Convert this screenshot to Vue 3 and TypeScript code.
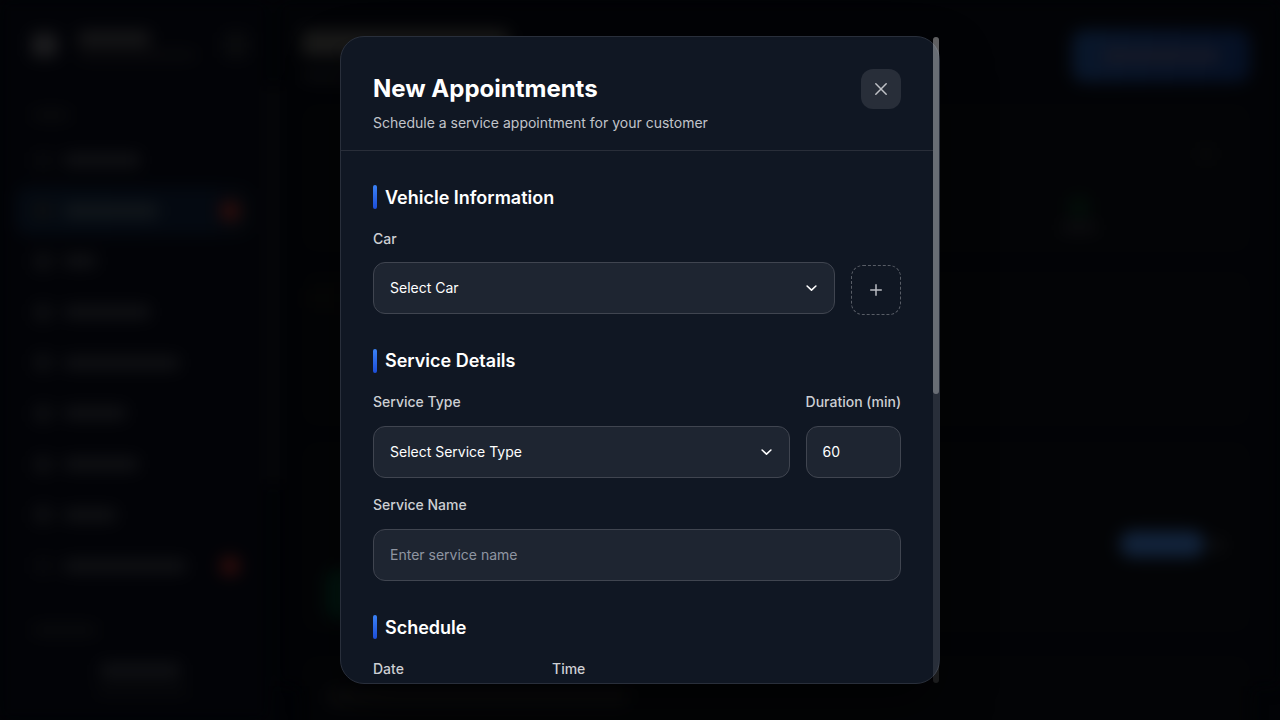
<script setup lang="ts">
interface NavItem {
  label: number
  icon: number
  active?: boolean
  badge?: boolean
}

const nav: NavItem[] = [
  { label: 76, icon: 0.5 },
  { label: 94, icon: 0.9, active: true, badge: true },
  { label: 32, icon: 1 },
  { label: 86, icon: 1 },
  { label: 115, icon: 1 },
  { label: 62, icon: 1 },
  { label: 74, icon: 1 },
  { label: 52, icon: 1 },
  { label: 122, icon: 0.5, badge: true },
]
</script>

<template>
  <div class="screen">
    <div class="dashboard" aria-hidden="true">
      <aside class="sidebar">
        <div class="brand">
          <i class="logo"></i>
          <div class="brand-copy"><i class="name"></i><i class="tagline"></i></div>
          <i class="collapse"></i>
        </div>
        <i class="caption"></i>
        <div v-for="(item, i) in nav" :key="i" class="nav-item" :class="{ active: item.active }">
          <i class="nav-icon" :style="{ opacity: item.icon }"></i>
          <i class="nav-label" :style="{ width: item.label + 'px' }"></i>
          <i v-if="item.badge" class="badge"></i>
        </div>
        <i class="caption account"></i>
        <i class="user"></i>
        <i class="role"></i>
      </aside>
      <i class="side-scroll"></i>
      <section class="main">
        <div class="page-head">
          <div class="page-copy"><i class="page-title"></i><i class="page-sub"></i></div>
          <div class="page-action"><i></i></div>
        </div>
        <div class="panel stats"><i class="dot"></i><i class="stat"></i><i class="stat-label"></i></div>
        <div class="panel filters"><i></i></div>
        <div class="panel card">
          <i class="go"></i>
          <i class="status"></i>
          <i class="more"></i>
        </div>
        <div class="panel last"><i></i></div>
      </section>
    </div>

    <div class="overlay">
      <div class="modal">
        <div class="content">
          <header class="head">
            <div>
              <h2>New Appointments</h2>
              <p>Schedule a service appointment for your customer</p>
            </div>
            <button class="close" type="button" aria-label="Close">
              <svg width="20" height="20" viewBox="0 0 20 20" fill="none" stroke="currentColor" stroke-width="1.5" stroke-linecap="round">
                <path d="M4.8 4.8 15.2 15.2M15.2 4.8 4.8 15.2" />
              </svg>
            </button>
          </header>

          <div class="body">
            <section>
              <h3>Vehicle Information</h3>
              <div class="row">
                <div class="field grow">
                  <label>Car</label>
                  <div class="control">
                    <span>Select Car</span>
                    <svg class="chevron" width="14" height="14" viewBox="0 0 14 14"><path d="M3.1 5 7.5 9.1l4.4-4.1" /></svg>
                  </div>
                </div>
                <button class="add" type="button" aria-label="Add car">
                  <svg width="16" height="16" viewBox="0 0 16 16" fill="none" stroke="currentColor" stroke-width="1.5">
                    <path d="M8 2.2v11.6M2.2 8h11.6" />
                  </svg>
                </button>
              </div>
            </section>

            <section>
              <h3>Service Details</h3>
              <div class="row service">
                <div class="field grow">
                  <label>Service Type</label>
                  <div class="control">
                    <span>Select Service Type</span>
                    <svg class="chevron" width="14" height="14" viewBox="0 0 14 14"><path d="M3.1 5 7.5 9.1l4.4-4.1" /></svg>
                  </div>
                </div>
                <div class="field duration">
                  <label>Duration (min)</label>
                  <div class="control"><span>60</span></div>
                </div>
              </div>
              <div class="field name-field">
                <label>Service Name</label>
                <div class="control placeholder"><span>Enter service name</span></div>
              </div>
            </section>

            <section>
              <h3>Schedule</h3>
              <div class="thirds">
                <label>Date</label>
                <label>Time</label>
              </div>
            </section>
          </div>
        </div>
      </div>
      <div class="scrollbar"><div class="thumb"></div></div>
    </div>
  </div>
</template>

<style>
html,
body {
  background: #020306;
  overflow: hidden;
}
</style>

<style scoped>
* { box-sizing: border-box; }
i { display: block; border-radius: 4px; flex: none; }
.screen {
  position: relative;
  width: 1280px;
  height: 720px;
  overflow: hidden;
  background: #020306;
  font-family: Inter, "Liberation Sans", sans-serif;
  -webkit-font-smoothing: antialiased;
}

/* dimmed dashboard behind the dialog */
.dashboard {
  display: flex;
  height: 720px;
  filter: blur(8px);
}
.sidebar { width: 268px; padding: 24px 16px 0; background: #020307; }
.brand { display: flex; align-items: center; height: 42px; padding: 0 0 0 16px; }
.logo { width: 25px; height: 24px; background: #1d1d1f; }
.brand-copy { margin-left: 21px; width: 124px; }
.name { width: 72px; height: 15px; background: #171718; }
.tagline { width: 118px; height: 8px; background: #0b0b0d; margin-top: 5px; }
.collapse { width: 24px; height: 26px; margin-left: 22px; background: #0a0b0d; }
.caption { width: 38px; height: 10px; margin: 44px 0 16px 16px; background: #0a0b0d; }
.nav-item {
  display: flex;
  align-items: center;
  height: 48px;
  margin-bottom: 2.7px;
  padding: 0 12px 0 18px;
}
.nav-item.active { background: linear-gradient(90deg, #040a12, #040911 80%, #04070a); border-radius: 12px; }
.nav-icon { width: 18px; height: 17px; background: #0e0f12; margin-right: 12px; }
.nav-label { height: 12px; background: #121316; }
.active .nav-label { background: #12171b; height: 14px; }
.badge { width: 20px; height: 20px; margin-left: auto; border-radius: 50%; background: #300d0c; }
.caption.account { width: 65px; margin: 35px 0 0 16px; }
.user { width: 80px; height: 15px; margin: 28px 0 0 84px; background: #101114; }
.role { width: 92px; height: 9px; margin: 8px 0 0 80px; background: #08090b; }
.side-scroll { width: 10px; height: 400px; margin: 85px 0 0; background: #06070a; }
.main { flex: 1; padding: 30px 30px 0 24px; background: #020306; }
.page-head { display: flex; justify-content: space-between; height: 74px; }
.page-title { width: 206px; height: 26px; background: #1a1a19; }
.page-sub { width: 260px; height: 10px; margin-top: 15px; background: #0b0c0e; }
.page-action {
  display: flex;
  justify-content: center;
  align-items: center;
  width: 178px;
  height: 52px;
  border-radius: 12px;
  background: linear-gradient(100deg, #09172b, #081327 50%, #051024);
}
.page-action i { width: 116px; height: 14px; background: #161926; }
.panel { border-radius: 14px; background: #030406; }
.stats { height: 148px; padding: 43px 37px 0 0; }
.dot { width: 14px; height: 14px; margin-left: auto; background: #08090a; }
.stat { width: 18px; height: 20px; margin: 36px 0 0 768px; background: #030f09; }
.stat-label { width: 36px; height: 11px; margin: 5px 0 0 759px; background: #0c0c0f; }
.filters { height: 154px; margin-top: 20px; padding: 16px 0 0 6px; }
.filters i { width: 60px; height: 20px; background: #060606; }
.card {
  display: flex;
  align-items: flex-start;
  height: 190px;
  margin-top: 16px;
  padding: 83px 26px 0 24px;
}
.go { width: 150px; height: 50px; margin-top: 44px; background: #02150f; border-radius: 12px; }
.status { width: 84px; height: 26px; margin: 6px 5px 0 auto; border-radius: 12px; background: #12233b; }
.more { width: 15px; height: 12px; margin-top: 14px; background: #0d0e10; }
.last { height: 100px; margin-top: 24px; padding: 33px 0 0 26px; }
.last i { width: 300px; height: 16px; background: #0b0b0c; }

/* dialog */
.overlay {
  position: absolute;
  inset: 0;
  display: flex;
  align-items: center;
  justify-content: center;
}
.modal {
  width: 600px;
  height: 648px;
  overflow: hidden;
  border: 1px solid #292f3b;
  border-radius: 24px;
  background: #101723;
  box-shadow: 0 25px 50px rgba(0, 0, 0, 0.5);
}
.content { width: 592px; }
.head {
  display: flex;
  justify-content: space-between;
  height: 114px;
  padding: 32px 32px 0;
  border-bottom: 1px solid #292e39;
}
h2 { margin: 0; font-size: 24px; line-height: 39px; font-weight: 700; color: #fff; }
p { margin: 4px 0 0; font-size: 14px; line-height: 22px; color: #c1c4ca; }
button { padding: 0; display: flex; align-items: center; justify-content: center; }
.close {
  width: 40px;
  height: 40px;
  border: 0;
  border-radius: 12px;
  background: #282e39;
  color: #bfc1c6;
}
.body { padding: 34px 32px 0; }
section { margin-bottom: 34.4px; }
h3 {
  display: flex;
  align-items: center;
  gap: 8px;
  height: 24px;
  margin: 0 0 18.9px;
  font-size: 18px;
  font-weight: 600;
  color: #fff;
}
h3::before {
  content: "";
  width: 4px;
  height: 24px;
  border-radius: 2px;
  background: linear-gradient(180deg, #3b82f6, #1d4ed8);
}
.row { display: flex; align-items: flex-end; gap: 16px; }
.grow { flex: 1; }
label { display: block; height: 21px; font-size: 14px; line-height: 21px; font-weight: 500; color: #cdcfd3; white-space: nowrap; }
.control {
  display: flex;
  align-items: center;
  justify-content: space-between;
  height: 52px;
  margin-top: 13.3px;
  padding: 0 16px;
  border: 1px solid #404550;
  border-radius: 12px;
  background: #1e2531;
  color: #fff;
  font-size: 14px;
}
.control span { margin-top: -1.2px; }
.placeholder { color: #8f95a1; }
.chevron { fill: none; stroke: #fff; stroke-width: 1.6; stroke-linecap: round; stroke-linejoin: round; }
.add {
  width: 50px;
  height: 50px;
  margin-bottom: -0.4px;
  border: 1px dashed #585d66;
  border-radius: 12px;
  background: transparent;
  color: #b9bcc2;
}
.duration { width: 95.45px; }
.name-field { margin-top: 16.7px; }
.thirds { display: grid; grid-template-columns: repeat(3, 1fr); gap: 9px; }
.scrollbar {
  position: absolute;
  left: 933px;
  top: 37px;
  width: 6px;
  height: 646px;
  border-radius: 3px;
  background: rgba(255, 255, 255, 0.1);
}
.thumb { height: 357px; border-radius: 3px; background: rgba(255, 255, 255, 0.3); }
</style>
